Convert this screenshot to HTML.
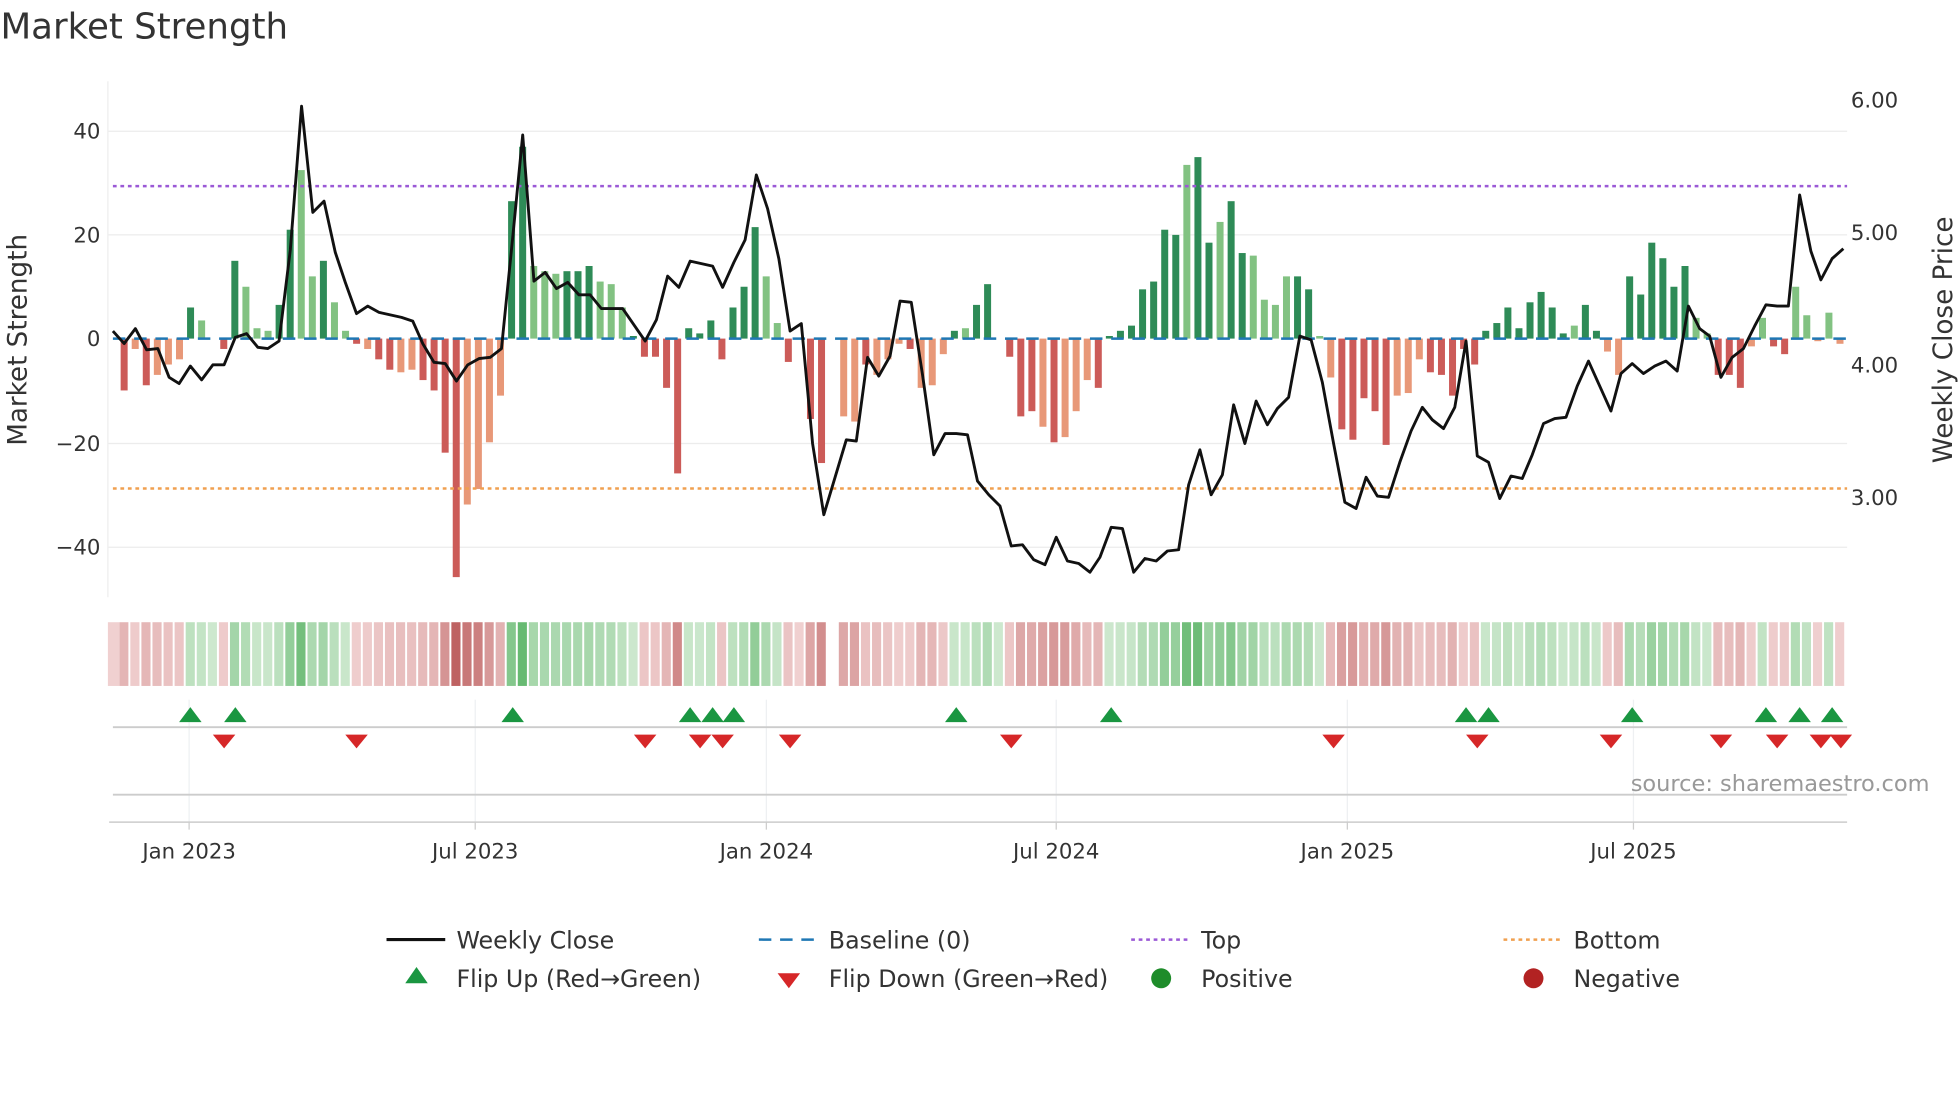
<!DOCTYPE html>
<html><head><meta charset="utf-8"><style>
html,body{margin:0;padding:0;background:#fff;width:1960px;height:1102px;overflow:hidden}
svg{display:block}
text{font-family:"DejaVu Sans","Liberation Sans",sans-serif}
</style></head><body>
<svg id="s" width="1960" height="1102" viewBox="0 0 1568 882" xmlns="http://www.w3.org/2000/svg">
<rect width="1568" height="882" fill="#fff"/>
<text x="0" y="31" font-size="28.5" fill="#333">Market Strength</text>
<g stroke="#ececec" stroke-width="1">
<line x1="86" x2="1478" y1="105" y2="105"/><line x1="86" x2="1478" y1="188" y2="188"/><line x1="86" x2="1478" y1="355" y2="355"/><line x1="86" x2="1478" y1="438" y2="438"/>
</g>
<line x1="86" x2="86" y1="65" y2="478" stroke="#eee"/>
<g font-size="17" fill="#333" text-anchor="end">
<text x="80" y="111">40</text><text x="80" y="194">20</text><text x="80" y="277">0</text><text x="80" y="361">−20</text><text x="80" y="444">−40</text>
</g>
<g font-size="17" fill="#333">
<text x="1481" y="86">6.00</text><text x="1481" y="192">5.00</text><text x="1481" y="298">4.00</text><text x="1481" y="404">3.00</text>
</g>
<text transform="translate(21,272) rotate(-90)" font-size="21" fill="#333" text-anchor="middle">Market Strength</text>
<text transform="translate(1562,272) rotate(-90)" font-size="21" fill="#333" text-anchor="middle">Weekly Close Price</text>
<g id="bars"></g>
<line x1="90" x2="1478" y1="271" y2="271" stroke="#1f77b4" stroke-width="2" stroke-dasharray="10,7"/>
<line x1="90" x2="1478" y1="149" y2="149" stroke="#9b59d6" stroke-width="2" stroke-dasharray="3,3"/>
<line x1="90" x2="1478" y1="391" y2="391" stroke="#f0a050" stroke-width="2" stroke-dasharray="3,3"/>
<polyline id="price" fill="none" stroke="#111" stroke-width="2.3" stroke-linejoin="round"/>
<g id="heat"></g>
<g stroke="#eef0f2"><line x1="151" x2="151" y1="560" y2="658"/><line x1="380" x2="380" y1="560" y2="658"/><line x1="613" x2="613" y1="560" y2="658"/><line x1="845" x2="845" y1="560" y2="658"/><line x1="1078" x2="1078" y1="560" y2="658"/><line x1="1307" x2="1307" y1="560" y2="658"/></g>
<line x1="90" x2="1478" y1="582" y2="582" stroke="#ccc" stroke-width="1.5"/>
<line x1="90" x2="1478" y1="636" y2="636" stroke="#ccc" stroke-width="1.5"/>
<line x1="87" x2="1478" y1="658" y2="658" stroke="#ccc" stroke-width="1.2"/>
<g id="flips"></g>
<text x="1544" y="633" font-size="18" fill="#999" text-anchor="end">source: sharemaestro.com</text>
<g stroke="#ccc"><line x1="151" x2="151" y1="658" y2="664"/><line x1="380" x2="380" y1="658" y2="664"/><line x1="613" x2="613" y1="658" y2="664"/><line x1="845" x2="845" y1="658" y2="664"/><line x1="1078" x2="1078" y1="658" y2="664"/><line x1="1307" x2="1307" y1="658" y2="664"/></g>
<g font-size="17" fill="#333" text-anchor="middle">
<text x="151" y="687">Jan 2023</text><text x="380" y="687">Jul 2023</text><text x="613" y="687">Jan 2024</text><text x="845" y="687">Jul 2024</text><text x="1078" y="687">Jan 2025</text><text x="1307" y="687">Jul 2025</text>
</g>
<g font-size="19" fill="#333">
<line x1="309" x2="356" y1="752" y2="752" stroke="#111" stroke-width="2.5"/><text x="365" y="759">Weekly Close</text>
<line x1="607" x2="654" y1="752" y2="752" stroke="#1f77b4" stroke-width="2" stroke-dasharray="10,7"/><text x="663" y="759">Baseline (0)</text>
<line x1="905" x2="952" y1="752" y2="752" stroke="#9b59d6" stroke-width="2" stroke-dasharray="3,3"/><text x="961" y="759">Top</text>
<line x1="1203" x2="1250" y1="752" y2="752" stroke="#f0a050" stroke-width="2" stroke-dasharray="3,3"/><text x="1259" y="759">Bottom</text>
<polygon points="333,774 342,787 324,787" fill="#1a9641"/><text x="365" y="790">Flip Up (Red→Green)</text>
<polygon points="622,779 640,779 631,791" fill="#d62728"/><text x="663" y="790">Flip Down (Green→Red)</text>
<circle cx="929" cy="783" r="8" fill="#1e8c2a"/><text x="961" y="790">Positive</text>
<circle cx="1227" cy="783" r="8" fill="#b22222"/><text x="1259" y="790">Negative</text>
</g>
</svg>
<script>
var v=[-10,-2,-9,-7,-5,-4,6,3.5,0,-2,15,10,2,1.5,6.5,21,32.5,12,15,7,1.5,-1,-2,-4,-6,-6.5,-6,-8,-10,-22,-46,-32,-29,-20,-11,26.5,37,14,13,12.5,13,13,14,11,10.5,6,0.5,-3.5,-3.5,-9.5,-26,2,1,3.5,-4,6,10,21.5,12,3,-4.5,0,-15.5,-24,0,-15,-16,-5,-7,-4,-1,-2,-9.5,-9,-3,1.5,2,6.5,10.5,0,-3.5,-15,-14,-17,-20,-19,-14,-8,-9.5,0.5,1.5,2.5,9.5,11,21,20,33.5,35,18.5,22.5,26.5,16.5,16,7.5,6.5,12,12,9.5,0.5,-7.5,-17.5,-19.5,-11.5,-14,-20.5,-11,-10.5,-4,-6.5,-7,-11,-2,-5,1.5,3,6,2,7,9,6,1,2.5,6.5,1.5,-2.5,-7,12,8.5,18.5,15.5,10,14,4,1,-7,-7,-9.5,-1.5,4,-1.5,-3,10,4.5,-0.5,5,-1];
var light=new Set([1,3,4,5,7,11,12,13,16,17,19,20,22,25,26,31,32,33,34,37,38,39,43,44,45,58,59,65,66,68,69,70,72,73,74,76,83,85,86,87,96,99,102,103,104,105,108,109,115,116,117,131,134,135,142,143,147,148,151,152,153,154,155,156,157]);
var ns="http://www.w3.org/2000/svg",bars=document.getElementById('bars'),heat=document.getElementById('heat');
function el(t,a,p){var e=document.createElementNS(ns,t);for(var k in a)e.setAttribute(k,a[k]);p.appendChild(e);return e;}
var last=-1;
for(var i=0;i<v.length;i++){var x=99+i*8.86,val=v[i];
 var col=val>=0?(light.has(i)?'#82c282':'#2e8b57'):(light.has(i)?'#e89878':'#cc5b58');
 var h=Math.abs(val)*4.15,y=val>=0?271-h:271;
 if(h>0.5)el('rect',{x:x-2.8,y:y,width:5.6,height:h,fill:col},bars);
 var m=Math.min(Math.abs(val)/40,1),c,s=val>0?1:(val<0?-1:last);
 if(val!==0)last=s;
 if(i===64)continue;
 if(s>0){c='rgb('+Math.round(205-110*m)+','+Math.round(232-50*m)+','+Math.round(206-100*m)+')';}
 else{c='rgb('+Math.round(240-50*m)+','+Math.round(208-110*m)+','+Math.round(208-110*m)+')';}
 el('rect',{x:x-3.9,y:498,width:7.3,height:51,fill:c},heat);}
el('rect',{x:86,y:498,width:9,height:51,fill:'#f0d0d0'},heat);
var P="90,265 99,275 108,263 117,280 126,279 135,302 143,307 152,293 161,304 170,292 179,292 188,270 197,267 206,278 214,279 223,273 232,200 241,85 250,170 259,161 268,202 276,226 285,251 294,245 303,250 312,252 321,254 330,257 338,275 347,290 356,291 365,305 374,292 383,287 392,286 401,279 410,190 418,108 427,225 436,218 445,231 454,226 463,236 472,236 481,247 490,247 498,247 507,260 516,273 525,256 534,221 543,230 552,209 561,211 570,213 578,230 587,210 596,192 605,140 614,167 623,207 632,265 641,259 650,355 659,412 668,382 677,352 685,353 694,286 703,301 712,285 720,241 729,242 738,300 747,364 756,347 765,347 774,348 782,385 791,396 800,405 809,437 818,436 827,448 836,452 845,430 854,449 863,451 872,458 880,446 889,422 898,423 907,458 916,447 925,449 934,441 943,440 951,388 960,360 969,396 978,380 987,324 996,355 1005,321 1014,340 1022,327 1031,318 1040,269 1049,272 1058,306 1067,355 1076,402 1085,407 1093,382 1102,397 1111,398 1120,370 1129,345 1138,326 1146,336 1155,343 1164,326 1173,273 1182,365 1191,370 1200,399 1209,381 1218,383 1226,364 1235,339 1244,335 1253,334 1262,309 1271,289 1280,309 1289,329 1297,299 1306,291 1315,299 1324,293 1333,289 1342,297 1351,245 1360,263 1368,269 1377,302 1386,286 1395,279 1404,261 1413,244 1422,245 1431,245 1440,156 1449,201 1457,224 1466,207 1475,199";
document.getElementById('price').setAttribute('points',P);
var fl=document.getElementById('flips');
[152,188,410,552,570,587,765,889,1173,1191,1306,1413,1440,1466].forEach(function(x){el('polygon',{points:(x)+',566 '+(x+9)+',578 '+(x-9)+',578',fill:'#1a9641'},fl);});
[179,285,516,560,578,632,809,1067,1182,1289,1377,1422,1457,1473].forEach(function(x){el('polygon',{points:(x-9)+',588 '+(x+9)+',588 '+x+',599',fill:'#d62728'},fl);});
</script>
</body></html>
